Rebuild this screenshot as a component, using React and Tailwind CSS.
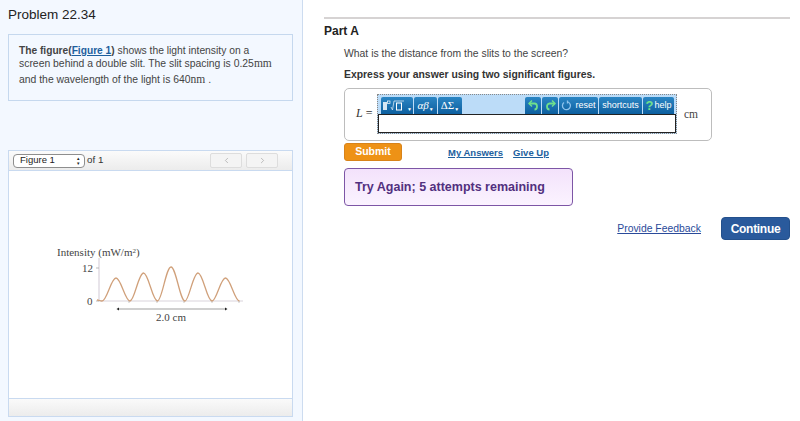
import { ChevronLeft, ChevronRight } from "lucide-react";

function ToolButton({ children, className = "" }) {
  return (
    <div className={`h-[17px] bg-gradient-to-b from-[#2b86c4] to-[#0c5f9f] rounded-t-[2px] flex items-center justify-center text-white text-[9px] leading-none ${className}`}>
      {children}
    </div>
  );
}

function Chart() {
  // five humps, peak heights from the figure
  const humps = [
    { x: 116, top: 278 },
    { x: 143.500, top: 273 },
    { x: 171, top: 267 },
    { x: 198, top: 273 },
    { x: 225.500, top: 278 },
  ];
  const base = 301;
  let d = "M97 300 C99 300 100 301 102 301";
  humps.forEach((h) => {
    d += ` C${h.x - 9} ${base} ${h.x - 5} ${h.top} ${h.x} ${h.top} C${h.x + 5} ${h.top} ${h.x + 9} ${base} ${h.x + 14} ${base}`;
  });
  return (
    <svg className="absolute left-0 top-0" width="292" height="340" viewBox="0 0 292 340">
      <path d="M99 258V301H243" fill="none" stroke="#d9d3dc" strokeWidth="1.2" />
      <path d="M96 268H99M96 301H99" stroke="#aaa" strokeWidth="0.8" />
      <path d="M129 301v2M157 301v2M184 301v2M212 301v2M239 301v2" stroke="#bbb" strokeWidth="0.8" />
      <path d={d} fill="none" stroke="#d0a07a" strokeWidth="1.3" />
      <path d="M118 309H226" stroke="#777" strokeWidth="0.7" />
      <path d="M116.500 309l2.500-1.500v3zM227.500 309l-2.500-1.500v3z" fill="#222" />
      <text x="57" y="255.500" fontFamily="Liberation Serif" fontSize="11" fill="#444">Intensity (mW/m<tspan fontSize="7" dy="-3">2</tspan><tspan dy="3">)</tspan></text>
      <text x="82" y="272" fontFamily="Liberation Serif" fontSize="11" fill="#444">12</text>
      <text x="87" y="305" fontFamily="Liberation Serif" fontSize="11" fill="#444">0</text>
      <text x="156" y="321" fontFamily="Liberation Serif" fontSize="11" fill="#444">2.0 cm</text>
    </svg>
  );
}

export default function App() {
  return (
    <div className="w-[800px] h-[421px] overflow-hidden bg-white flex font-['Liberation_Sans',sans-serif] text-[#333]">
      {/* Left column */}
      <div className="w-[303px] h-full bg-[#f3f8ff] border-r border-[#cddcf0] pl-[8px] pr-[9px] shrink-0">
        <h1 className="text-[13.500px] leading-[16px] pt-[7px] text-[#222]">Problem 22.34</h1>
        <div className="mt-[11px] h-[67px] border border-[#c5d8ee] px-[10px] pt-[9px] text-[#444] whitespace-nowrap">
          <p className="leading-[13px] text-[10.300px]">
            <b className="text-[10.200px]">The figure(<a className="text-[#1d5f9e] underline">Figure 1</a>)</b> shows the light intensity on a
          </p>
          <p className="leading-[13px] text-[10.400px]">
            screen behind a double slit. The slit spacing is 0.25<span className="font-['Liberation_Serif',serif] text-[11.500px]">mm</span>
          </p>
          <p className="leading-[13px] mt-[3px] text-[10.400px]">
            and the wavelength of the light is 640<span className="font-['Liberation_Serif',serif] text-[11.500px]">nm</span> .
          </p>
        </div>

        <div className="mt-[49px] h-[267px] border border-[#c9daf0] flex flex-col bg-white relative">
          <div className="h-[20px] border-b border-[#c9daf0] bg-gradient-to-b from-[#fbfbfb] to-[#ececec] flex items-center pl-[4px] pr-[14px] text-[9.800px]">
            <div className="w-[72px] h-[14px] border border-[#8e8e8e] rounded-[4px] bg-white flex items-center pl-[6px] pr-[4px] justify-between text-[#222] text-[9.500px]">
              Figure 1
              <span className="text-[7px] leading-[5px] flex flex-col">
                <span className="scale-75">▴</span>
                <span className="scale-75">▾</span>
              </span>
            </div>
            <span className="ml-[2px]">of 1</span>
            <div className="ml-auto flex gap-[4px]">
              <div className="w-[32px] h-[15px] border border-[#ddd] rounded-[2px] bg-[#f4f4f4] flex items-center justify-center">
                <ChevronLeft size={9} className="text-[#aaa]" />
              </div>
              <div className="w-[32px] h-[15px] border border-[#ddd] rounded-[2px] bg-[#f4f4f4] flex items-center justify-center">
                <ChevronRight size={9} className="text-[#aaa]" />
              </div>
            </div>
          </div>
          <div className="flex-1 relative">
            <div className="absolute -left-[9px] -top-[171px]">
              <Chart />
            </div>
          </div>
          <div className="h-[18px] border-t border-[#c9daf0] bg-gradient-to-b from-[#fafafa] to-[#ececec]"></div>
        </div>
      </div>

      {/* Right column */}
      <div className="flex-1 pl-[21px] pr-[10px] pt-[17px]">
        <div className="border-t-2 border-[#d6d3d3]"></div>
        <h2 className="text-[12px] leading-[14px] font-bold mt-[5px] text-[#222]">Part A</h2>

        <div className="pl-[20px]">
          <p className="text-[10.400px] leading-[13px] mt-[9px] text-[#444]">What is the distance from the slits to the screen?</p>
          <p className="text-[10.400px] leading-[13px] mt-[8px] font-bold text-[#333]">Express your answer using two significant figures.</p>

          <div className="mt-[7px] w-[368px] h-[53px] border border-[#bdbdbd] rounded-[5px] flex items-start">
            <div className="w-[32px] pt-[18px] pl-[11px] text-[12px] leading-[13px] font-['Liberation_Serif',serif] whitespace-nowrap text-[#333]">
              <i>L</i> =
            </div>
            <div className="w-[300px] h-[40px] mt-[5px] border border-dotted border-[#888] bg-[#bcdcf8] flex flex-col">
              <div className="h-[19px] shrink-0 flex items-end pl-[3px] pr-[2px] gap-[1px]">
                <ToolButton className="w-[32px] font-['Liberation_Serif',serif] gap-[1px]">
                  <svg width="24" height="13" viewBox="0 0 24 13" fill="none">
                    <rect x="1" y="3" width="4" height="8" fill="#d8e8f4" />
                    <rect x="5.500" y="2" width="2.500" height="2.500" stroke="#fff" strokeWidth="0.7" />
                    <path d="M9 8L10.500 11L12 2H22" stroke="#d8e8f4" strokeWidth="0.8" />
                    <rect x="14.500" y="4" width="5" height="7" stroke="#fff" strokeWidth="1" />
                  </svg>
                  <span className="text-[5px] self-end pb-[2px]">▼</span>
                </ToolButton>
                <ToolButton className="w-[23px] font-['Liberation_Serif',serif] italic text-[11px]">
                  αβ<span className="text-[5px] self-end pb-[2px] not-italic">▼</span>
                </ToolButton>
                <ToolButton className="w-[24px] font-['Liberation_Serif',serif] text-[11px]">
                  ΔΣ<span className="text-[5px] self-end pb-[2px]">▼</span>
                </ToolButton>
                <div className="flex-1"></div>
                <ToolButton className="w-[16px]">
                  <svg width="11" height="11" viewBox="0 0 11 11" fill="none">
                    <path d="M1 3.500H6.500C8.500 3.500 9 5.500 9 6.500C9 8 8 9.500 6.500 9.500" stroke="#6fe08c" strokeWidth="1.800" />
                    <path d="M4 0.500L1 3.500L4 6.500" stroke="#6fe08c" strokeWidth="1.500" />
                  </svg>
                </ToolButton>
                <ToolButton className="w-[16px]">
                  <svg width="11" height="11" viewBox="0 0 11 11" fill="none">
                    <path d="M10 3.500H4.500C2.500 3.500 2 5.500 2 6.500C2 8 3 9.500 4.500 9.500" stroke="#6fe08c" strokeWidth="1.800" />
                    <path d="M7 0.500L10 3.500L7 6.500" stroke="#6fe08c" strokeWidth="1.500" />
                  </svg>
                </ToolButton>
                <ToolButton className="w-[39px] gap-[3px] text-[9.500px]">
                  <svg width="11" height="11" viewBox="0 0 11 11" fill="none">
                    <path d="M3 2.500A4 4 0 1 0 7 2" stroke="#8ec3ec" strokeWidth="1.300" />
                    <path d="M6.500 0.500V3.500" stroke="#8ec3ec" strokeWidth="1.300" />
                  </svg>
                  reset
                </ToolButton>
                <ToolButton className="w-[43px]">shortcuts</ToolButton>
                <ToolButton className="w-[31px] gap-[1px] text-[9.500px]">
                  <span className="text-[#6fe08c] text-[13px] font-bold">?</span>help
                </ToolButton>
              </div>
              <div className="flex-1 bg-white border-[1.500px] border-[#222]"></div>
            </div>
            <div className="pl-[7px] pt-[19px] text-[11.500px] leading-[13px] font-['Liberation_Serif',serif] text-[#444]">cm</div>
          </div>

          <div className="mt-[2px] flex items-start">
            <div className="w-[58px] h-[18px] rounded-[3px] bg-[#ee9216] border border-[#d8831a] text-white text-[10.500px] font-bold flex items-center justify-center">
              Submit
            </div>
            <a className="ml-[46px] mt-[3px] text-[9.500px] leading-[13px] font-bold underline text-[#1d5f9e]">My Answers</a>
            <a className="ml-[10px] mt-[3px] text-[9.500px] leading-[13px] font-bold underline text-[#1d5f9e]">Give Up</a>
          </div>

          <div className="mt-[7px] w-[229px] h-[38px] rounded-[4px] border border-[#7d56a6] bg-gradient-to-b from-[#f3e2fb] to-[#fbf3ff] flex items-center pl-[10px] text-[12.500px] font-bold text-[#52307f]">
            Try Again; 5 attempts remaining
          </div>
        </div>

        <div className="mt-[11px] flex items-center justify-end">
          <a className="text-[10.400px] underline text-[#2a4a9a] mt-[1px]">Provide Feedback</a>
          <div className="ml-[20px] w-[69px] h-[23px] rounded-[4px] bg-[#2a5a9c] border border-[#24508c] text-white text-[12px] tracking-[-0.3px] font-bold flex items-center justify-center">
            Continue
          </div>
        </div>
      </div>
    </div>
  );
}
